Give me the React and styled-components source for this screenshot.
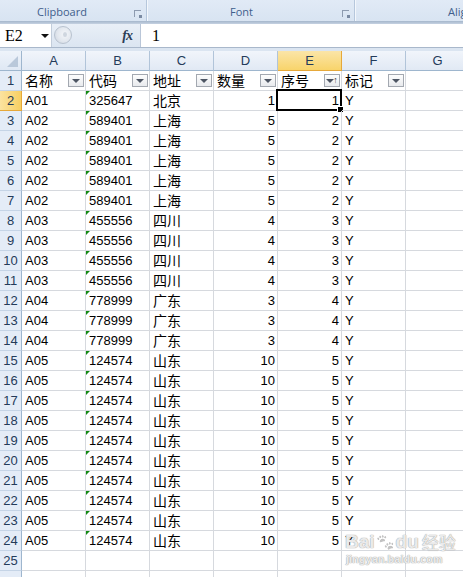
import styled, { createGlobalStyle } from "styled-components";

const rows = [
  ["A01", "325647", "北京", 1, 1],
  ...Array(5).fill(["A02", "589401", "上海", 5, 2]),
  ...Array(4).fill(["A03", "455556", "四川", 4, 3]),
  ...Array(3).fill(["A04", "778999", "广东", 3, 4]),
  ...Array(10).fill(["A05", "124574", "山东", 10, 5]),
];

const heads = ["名称", "代码", "地址", "数量", "序号", "标记"];
const letters = ["A", "B", "C", "D", "E", "F", "G"];

export default function App() {
  return (
    <Page>
      <Global />
      <Ribbon>
        <Group $w={147} $pad={37}>
          Clipboard
          <Launcher />
        </Group>
        <Group $w={208} $pad={83}>
          Font
          <Launcher />
        </Group>
        <Group $w={108} $pad={93} $last>
          Alignment
        </Group>
      </Ribbon>
      <RibbonEdge />

      <FormulaBar>
        <NameBox>
          E2
          <Arrow />
        </NameBox>
        <Tools>
          <Handle />
          <Fx>fx</Fx>
        </Tools>
        <Formula>1</Formula>
      </FormulaBar>
      <BarEdge />

      <Sheet>
        <Corner>
          <CornerMark />
        </Corner>
        {letters.map((l) => (
          <ColHead key={l} $on={l === "E"}>
            {l}
          </ColHead>
        ))}

        <RowHead>1</RowHead>
        {heads.map((h, i) => (
          <Cell key={h}>
            <Zh>{h}</Zh>
            <Filter>
              <Tri />
              {i === 4 && <Sort>↑</Sort>}
            </Filter>
          </Cell>
        ))}
        <Cell />

        {rows.map((r, i) => (
          <Row key={i} n={i + 2} r={r} />
        ))}

        <RowHead>25</RowHead>
        {letters.map((l) => (
          <Cell key={l} />
        ))}
        <RowHead />
        {letters.map((l) => (
          <Cell key={l} />
        ))}
      </Sheet>

      <Mark>
        <MarkTop>
          Bai<Paw>🐾</Paw>du<MarkZh>经验</MarkZh>
        </MarkTop>
        <MarkUrl>jingyan.baidu.com</MarkUrl>
      </Mark>
    </Page>
  );
}

function Row({ n, r }) {
  const active = n === 2;
  return (
    <>
      <RowHead $on={active}>{n}</RowHead>
      <Cell>{r[0]}</Cell>
      <Cell>
        <Flag />
        {r[1]}
      </Cell>
      <Cell>
        <Zh>{r[2]}</Zh>
      </Cell>
      <Cell $right>{r[3]}</Cell>
      <Cell $right>
        {r[4]}
        {active && (
          <Active>
            <FillHandle />
          </Active>
        )}
      </Cell>
      <Cell>Y</Cell>
      <Cell />
    </>
  );
}

const Global = createGlobalStyle`
  html, body {
    margin: 0;
    padding: 0;
    background: #ffffff;
    overflow: hidden;
  }
`;

const Page = styled.div`
  position: relative;
  width: 463px;
  height: 577px;
  overflow: hidden;
  font-family: "Liberation Sans", Arial, sans-serif;
  background: #ffffff;
`;

const Ribbon = styled.div`
  display: flex;
  height: 21px;
  background: linear-gradient(#e1eaf6, #d8e4f2);
  overflow: hidden;
`;

const Group = styled.div`
  position: relative;
  flex: none;
  box-sizing: border-box;
  width: ${(p) => p.$w}px;
  padding-left: ${(p) => p.$pad}px;
  padding-top: 5px;
  font-family: "Open Sans", "Liberation Sans", sans-serif;
  font-size: 11px;
  line-height: 14px;
  color: #3f5e8c;
  white-space: nowrap;
  overflow: hidden;
  border-right: ${(p) => (p.$last ? "none" : "1px solid #b6c7dc")};
  box-shadow: ${(p) => (p.$last ? "none" : "1px 0 0 #f3f7fc")};
`;

const Launcher = styled.span`
  position: absolute;
  right: 5px;
  top: 10px;
  width: 6px;
  height: 6px;
  border-top: 1px solid #8d9bb0;
  border-left: 1px solid #8d9bb0;
  &::after {
    content: "";
    position: absolute;
    right: -1px;
    bottom: -1px;
    width: 3px;
    height: 3px;
    background: #7a8aa2;
  }
`;

const RibbonEdge = styled.div`
  height: 3px;
  background: linear-gradient(#a5b6cb, #c5d2e2);
`;

const FormulaBar = styled.div`
  display: flex;
  height: 23px;
  background: #ffffff;
`;

const NameBox = styled.div`
  display: flex;
  align-items: center;
  width: 52px;
  box-sizing: border-box;
  padding-left: 5px;
  font-family: "Liberation Serif", "Times New Roman", serif;
  font-size: 16px;
  color: #000;
  border-right: 1px solid #c2cddb;
`;

const Arrow = styled.span`
  margin-left: 18px;
  width: 0;
  height: 0;
  border-left: 4px solid transparent;
  border-right: 4px solid transparent;
  border-top: 4px solid #111;
`;

const Tools = styled.div`
  position: relative;
  display: flex;
  align-items: center;
  justify-content: flex-end;
  width: 89px;
  box-sizing: border-box;
  padding-right: 8px;
  background: linear-gradient(#e9eff7, #dbe5f1);
  border-right: 1px solid #b9c6d8;
`;

const Handle = styled.span`
  position: absolute;
  left: 2px;
  top: 2px;
  width: 18px;
  height: 18px;
  border-radius: 50%;
  background: radial-gradient(circle at 60% 45%, #f4f6f9 0, #e2e7ee 55%, #c9d1dc 100%);
  border: 1px solid #b8c2cf;
  box-sizing: border-box;
  &::after {
    content: "";
    position: absolute;
    left: 8px;
    top: 5px;
    width: 4px;
    height: 5px;
    border-radius: 50%;
    background: #cfd6df;
  }
`;

const Fx = styled.span`
  font-family: "Liberation Serif", serif;
  font-style: italic;
  font-weight: bold;
  font-size: 14px;
  color: #2c3e57;
  letter-spacing: -1px;
`;

const Formula = styled.div`
  flex: 1;
  display: flex;
  align-items: center;
  padding-left: 11px;
  font-family: "Liberation Serif", "Times New Roman", serif;
  font-size: 16px;
  color: #000;
`;

const BarEdge = styled.div`
  height: 4px;
  box-sizing: border-box;
  border-top: 1px solid #a9b8cb;
  background: #dbe5f1;
`;

const Sheet = styled.div`
  display: grid;
  grid-template-columns: 22px repeat(6, 64px) 64px;
  grid-auto-rows: 20px;
  font-size: 13px;
  color: #000;
`;

const Corner = styled.div`
  position: relative;
  box-sizing: border-box;
  background: linear-gradient(#eef3fa, #dfe8f4);
  border-right: 1px solid #9eb6ce;
  border-bottom: 1px solid #9eb6ce;
`;

const CornerMark = styled.span`
  position: absolute;
  right: 3px;
  bottom: 3px;
  width: 0;
  height: 0;
  border-left: 11px solid transparent;
  border-bottom: 11px solid #b9c8da;
`;

const ColHead = styled.div`
  box-sizing: border-box;
  display: flex;
  align-items: center;
  justify-content: center;
  font-size: 13px;
  color: #243b5a;
  background: ${(p) =>
    p.$on
      ? "linear-gradient(#fbe5a8, #f8d46b)"
      : "linear-gradient(#f1f5fb, #e1e9f4)"};
  border-right: 1px solid ${(p) => (p.$on ? "#e6a83a" : "#b1c4d9")};
  border-bottom: 1px solid ${(p) => (p.$on ? "#e6a83a" : "#9eb6ce")};
`;

const RowHead = styled.div`
  box-sizing: border-box;
  display: flex;
  align-items: center;
  justify-content: center;
  font-size: 13px;
  color: #243b5a;
  background: ${(p) =>
    p.$on ? "linear-gradient(90deg, #fbe3a0, #f7cf62)" : "#e4ecf7"};
  border-right: 1px solid ${(p) => (p.$on ? "#e6a83a" : "#9eb6ce")};
  border-bottom: 1px solid ${(p) => (p.$on ? "#e6a83a" : "#c5d4e6")};
`;

const Cell = styled.div`
  position: relative;
  box-sizing: border-box;
  display: flex;
  align-items: center;
  justify-content: ${(p) => (p.$right ? "flex-end" : "flex-start")};
  padding: 0 2px 0 3px;
  white-space: nowrap;
  border-right: 1px solid #d6d9de;
  border-bottom: 1px solid #d6d9de;
`;

const Zh = styled.span`
  font-family: "Noto Sans CJK SC", "Liberation Sans", sans-serif;
  font-size: 14px;
  line-height: 19px;
`;

const Filter = styled.span`
  position: absolute;
  right: 1px;
  top: 3px;
  width: 16px;
  height: 13px;
  box-sizing: border-box;
  display: flex;
  align-items: center;
  justify-content: center;
  gap: 1px;
  border: 1px solid #a3a8b0;
  background: linear-gradient(#fdfdfd, #e8eaed);
`;

const Tri = styled.span`
  width: 0;
  height: 0;
  border-left: 4px solid transparent;
  border-right: 4px solid transparent;
  border-top: 4px solid #4d5563;
`;

const Sort = styled.span`
  font-size: 9px;
  line-height: 9px;
  color: #333;
  margin-left: -2px;
`;

const Flag = styled.span`
  position: absolute;
  left: 0;
  top: 0;
  width: 0;
  height: 0;
  border-top: 4px solid #138a13;
  border-right: 4px solid transparent;
`;

const Active = styled.span`
  position: absolute;
  left: -2px;
  top: -2px;
  right: -1px;
  bottom: -1px;
  border: 2px solid #000;
  pointer-events: none;
`;

const FillHandle = styled.span`
  position: absolute;
  right: -4px;
  bottom: -4px;
  width: 5px;
  height: 5px;
  background: #000;
  border: 1px solid #fff;
`;

const Mark = styled.div`
  position: absolute;
  left: 345px;
  top: 532px;
  display: flex;
  flex-direction: column;
  align-items: flex-start;
  white-space: nowrap;
  color: rgba(255, 255, 255, 0.8);
  text-shadow: 0 0 1px #a0a0a0, 0 0 1px #a0a0a0;
  pointer-events: none;
`;

const MarkTop = styled.div`
  display: flex;
  align-items: center;
  font-family: "Liberation Sans", sans-serif;
  font-weight: bold;
  font-size: 19px;
  line-height: 20px;
`;

const Paw = styled.span`
  font-size: 15px;
  filter: grayscale(1) brightness(1.8);
  margin: 0 1px;
`;

const MarkZh = styled.span`
  font-family: "Noto Sans CJK SC", sans-serif;
  font-size: 17px;
  font-weight: normal;
  margin-left: 3px;
`;

const MarkUrl = styled.div`
  font-family: "Liberation Sans", sans-serif;
  font-size: 11px;
  line-height: 11px;
  font-weight: bold;
  margin-left: 1px;
  margin-top: 2px;
`;
